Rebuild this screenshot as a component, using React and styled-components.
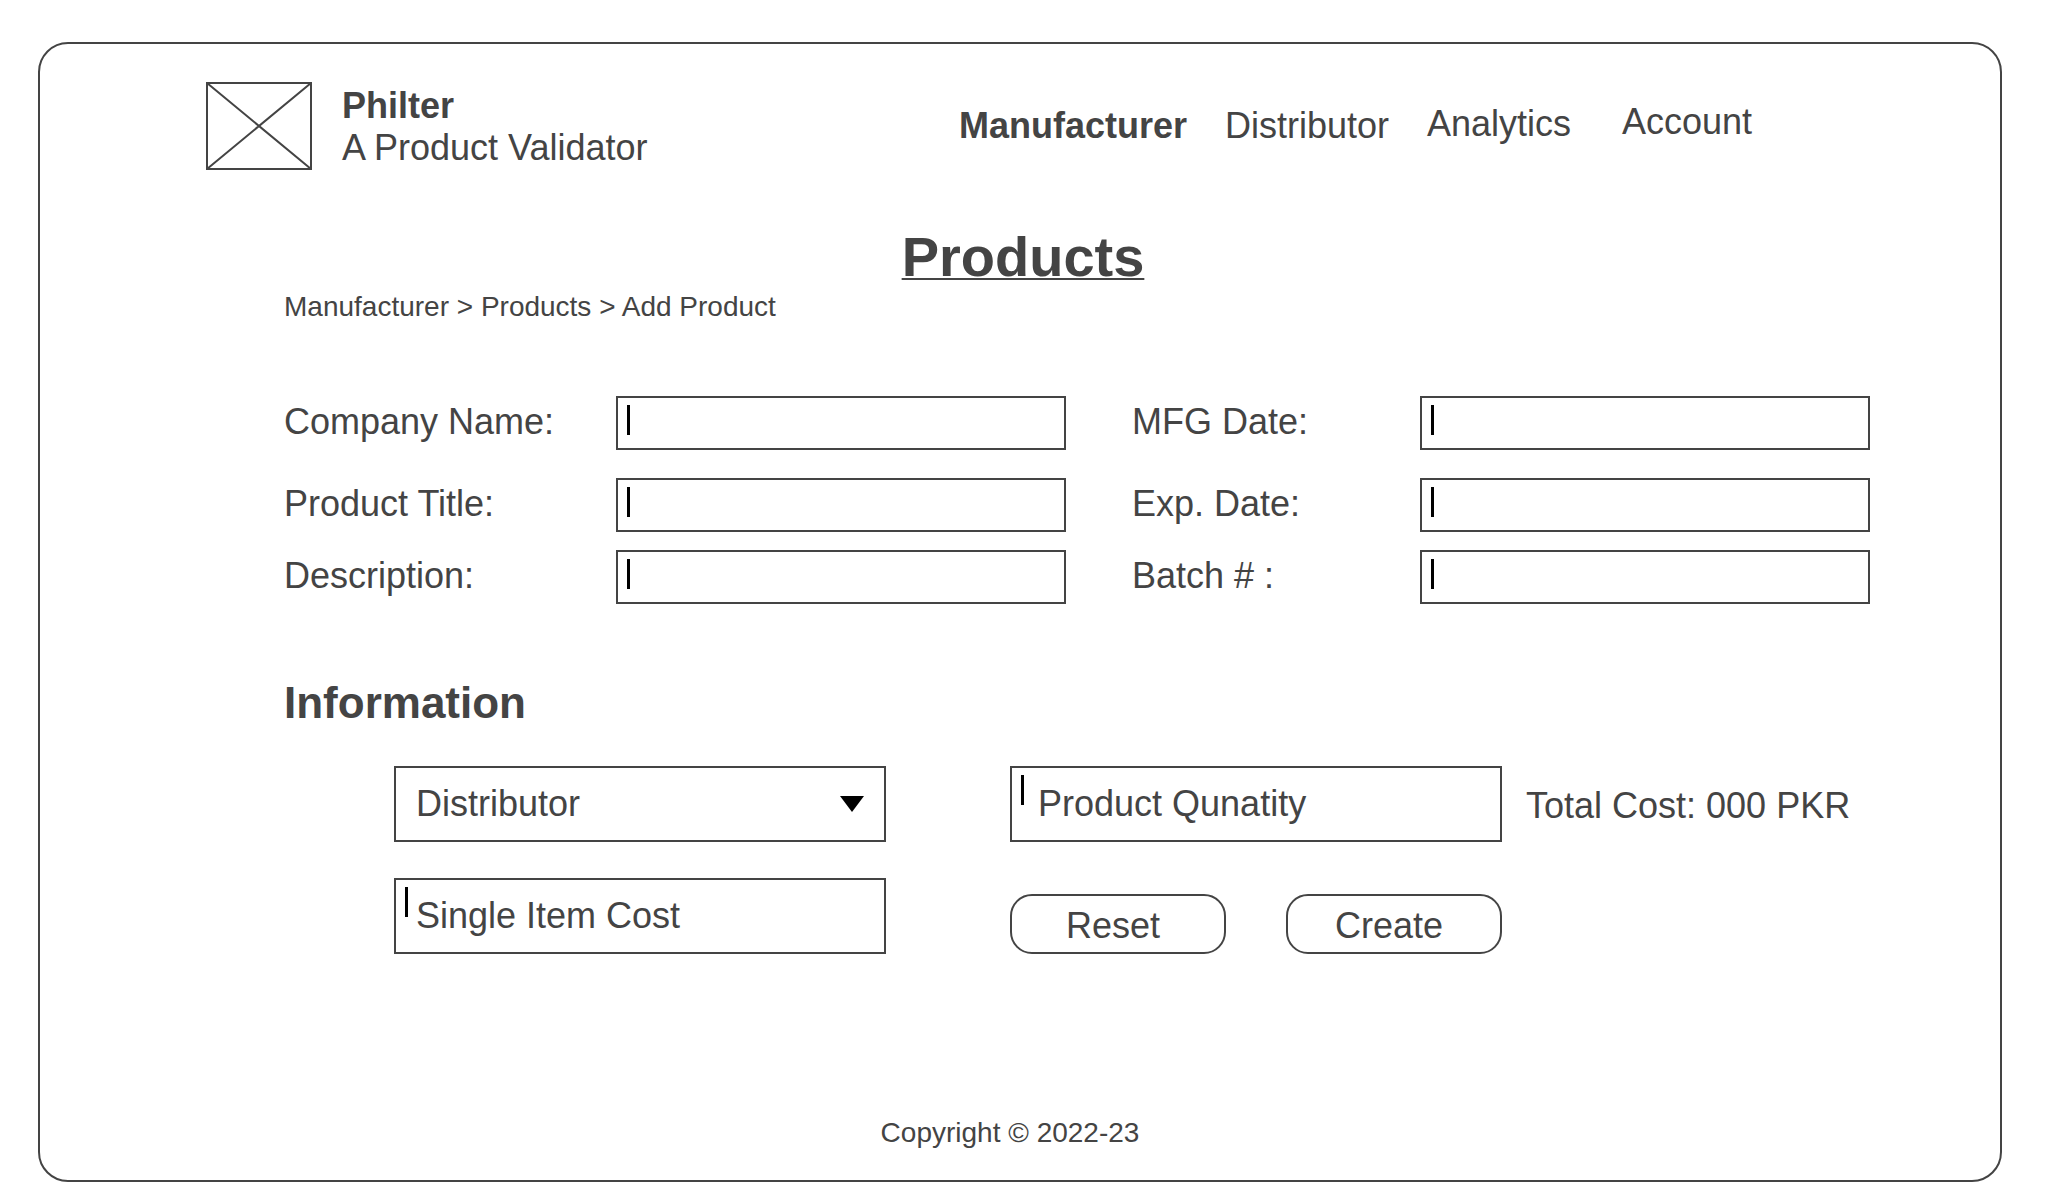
import React from "react";
import styled, { createGlobalStyle } from "styled-components";

const ink = "#444";

const GlobalStyle = createGlobalStyle`
  *, *::before, *::after { box-sizing: border-box; }
  body {
    margin: 0;
    background: #fff;
    color: ${ink};
    font-family: "Liberation Sans", Arial, Helvetica, sans-serif;
    font-size: 36px;
    line-height: 42px;
  }
  h1, h2, p { margin: 0; }
  input, select, button { font: inherit; color: inherit; }
`;

const Page = styled.div`
  display: flex;
  padding: 42px 46px 18px 38px;
  min-height: 100vh;
`;

const Frame = styled.div`
  flex: 1;
  display: flex;
  flex-direction: column;
  border: 2px solid ${ink};
  border-radius: 30px;
`;

const Header = styled.header`
  display: flex;
  align-items: center;
  padding: 38px 248px 0 166px;
`;

const Logo = styled.svg`
  display: block;
  width: 106px;
  height: 88px;
  margin-right: 30px;
`;

const Brand = styled.div`
  padding-top: 2px;
`;

const BrandName = styled.p`
  font-weight: 700;
`;

const Nav = styled.nav`
  display: grid;
  grid-template-columns: 266px 202px 195px auto;
  align-items: start;
  margin-left: auto;
`;

const NavLink = styled.a`
  color: inherit;
  text-decoration: none;
  font-weight: ${(p) => (p["aria-current"] ? 700 : 400)};
  line-height: ${(p) => p.$line || 42}px;
`;

const Main = styled.main`
  padding: 55px 130px 0 244px;
`;

const Title = styled.h1`
  padding-right: 108px;
  font-size: 56px;
  line-height: 64px;
  text-align: center;
  text-decoration: underline;
  text-decoration-thickness: 2px;
  text-underline-offset: 2px;
  text-decoration-skip-ink: none;
`;

const Breadcrumb = styled.p`
  margin: 2px 0 73px;
  font-size: 28px;
  line-height: 32px;
`;

const FieldRow = styled.div`
  display: grid;
  grid-template-columns: 332px 1fr 354px 1fr;
  align-items: center;
  margin-bottom: ${(p) => p.$gap}px;
`;

const Label = styled.label`
  padding: 0 0 2px ${(p) => (p.$second ? 66 : 0)}px;
`;

const Control = styled.div`
  position: relative;
`;

const TextInput = styled.input`
  display: block;
  width: 100%;
  height: ${(p) => (p.$tall ? 76 : 54)}px;
  padding: 0 22px 0 ${(p) => p.$indent || 20}px;
  border: 2px solid ${ink};
  border-radius: 0;
  background: #fff;
  outline: none;
  &::placeholder { color: ${ink}; opacity: 1; }
`;

const Caret = styled.span`
  position: absolute;
  top: 9px;
  left: 11px;
  width: 3px;
  height: 30px;
  background: #000;
  pointer-events: none;
`;

const Select = styled.select`
  display: block;
  width: 100%;
  height: 76px;
  padding: 0 60px 0 20px;
  border: 2px solid ${ink};
  border-radius: 0;
  background: #fff;
  appearance: none;
`;

const Arrow = styled.svg`
  position: absolute;
  top: 30px;
  right: 22px;
  width: 24px;
  height: 16px;
  pointer-events: none;
`;

const SectionTitle = styled.h2`
  margin: 74px 0 38px;
  font-size: 44px;
  line-height: 50px;
`;

const Information = styled.div`
  display: flex;
  padding-left: 110px;
`;

const InfoGrid = styled.div`
  flex: 1;
  display: grid;
  grid-template-columns: 1fr 1fr;
  gap: 36px 124px;
  align-items: end;
`;

const Total = styled.p`
  width: 368px;
  padding-left: 24px;
  line-height: 80px;
  white-space: nowrap;
`;

const Actions = styled.div`
  display: grid;
  grid-template-columns: 1fr 1fr;
  gap: 60px;
`;

const Button = styled.button`
  height: 60px;
  padding: 4px 10px 0 0;
  border: 2px solid ${ink};
  border-radius: 22px;
  background: #fff;
`;

const Footer = styled.footer`
  margin-top: auto;
  padding: 0 20px 31px 0;
  font-size: 28px;
  line-height: 32px;
  text-align: center;
`;

const rows = [
  { gap: 28, fields: [["company", "Company Name:"], ["mfg", "MFG Date:"]] },
  { gap: 18, fields: [["title", "Product Title:"], ["exp", "Exp. Date:"]] },
  { gap: 0, fields: [["description", "Description:"], ["batch", "Batch # :"]] },
];

export default function App() {
  return (
    <Page>
      <GlobalStyle />
      <Frame>
        <Header>
          <Logo viewBox="0 0 106 88" fill="none" stroke={ink} strokeWidth="2" aria-hidden="true">
            <path d="M1 1h104v86H1zM1 1l104 86M105 1L1 87" />
          </Logo>
          <Brand>
            <BrandName>Philter</BrandName>
            <p>A Product Validator</p>
          </Brand>
          <Nav>
            <NavLink href="#manufacturer" aria-current="page">Manufacturer</NavLink>
            <NavLink href="#distributor">Distributor</NavLink>
            <NavLink href="#analytics" $line={38}>Analytics</NavLink>
            <NavLink href="#account" $line={34}>Account</NavLink>
          </Nav>
        </Header>
        <Main>
          <Title>Products</Title>
          <Breadcrumb>Manufacturer &gt; Products &gt; Add Product</Breadcrumb>
          <form onSubmit={(e) => e.preventDefault()}>
            {rows.map((row) => (
              <FieldRow key={row.fields[0][0]} $gap={row.gap}>
                {row.fields.map(([id, text], i) => (
                  <React.Fragment key={id}>
                    <Label htmlFor={id} $second={i === 1}>{text}</Label>
                    <Control>
                      <TextInput id={id} type="text" />
                      <Caret />
                    </Control>
                  </React.Fragment>
                ))}
              </FieldRow>
            ))}
            <SectionTitle>Information</SectionTitle>
            <Information>
              <InfoGrid>
                <Control>
                  <Select aria-label="Distributor" defaultValue="distributor">
                    <option value="distributor">Distributor</option>
                  </Select>
                  <Arrow viewBox="0 0 24 16" aria-hidden="true">
                    <path d="M0 0h24L12 16z" fill="#000" />
                  </Arrow>
                </Control>
                <Control>
                  <TextInput $tall $indent={26} aria-label="Product Qunatity" placeholder="Product Qunatity" />
                  <Caret />
                </Control>
                <Control>
                  <TextInput $tall aria-label="Single Item Cost" placeholder="Single Item Cost" />
                  <Caret />
                </Control>
                <Actions>
                  <Button type="reset">Reset</Button>
                  <Button type="submit">Create</Button>
                </Actions>
              </InfoGrid>
              <Total>Total Cost: 000 PKR</Total>
            </Information>
          </form>
        </Main>
        <Footer>Copyright © 2022-23</Footer>
      </Frame>
    </Page>
  );
}
